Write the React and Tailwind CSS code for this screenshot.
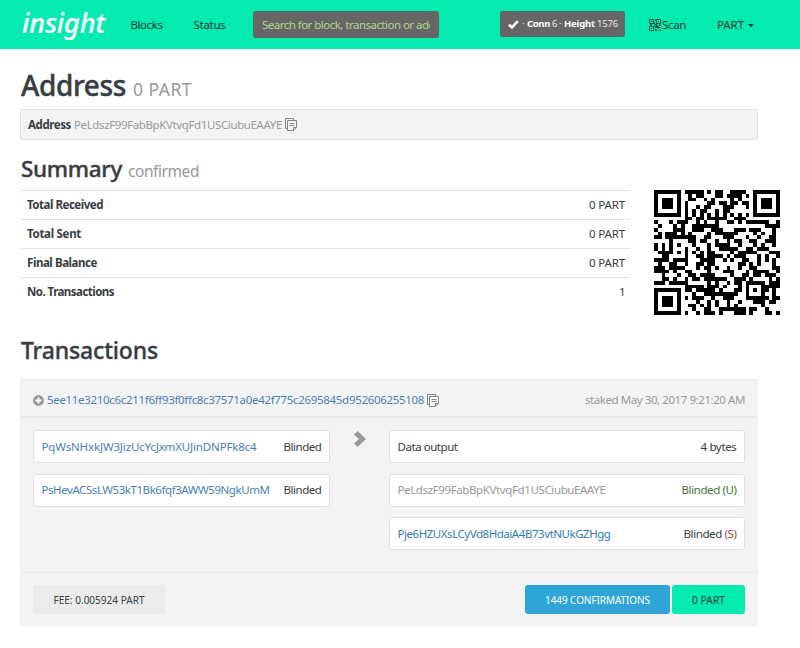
import { useLayoutEffect, useRef } from "react";

/* Text run with a fixed advance width: tracking is measured from the font. */
function Fit({ w, className = "", children }) {
  const ref = useRef(null);
  useLayoutEffect(() => {
    const el = ref.current;
    el.style.letterSpacing = "0px";
    const natural = el.getBoundingClientRect().width;
    el.style.letterSpacing = (w - natural) / el.textContent.length + "px";
  }, [w]);
  return (
    <span ref={ref} className={"inline-block shrink-0 whitespace-pre " + className}>
      {children}
    </span>
  );
}

/* ---- QR code, version 4, error correction M ---- */
const SIZE = 33;
const EXP = [];
const LOG = [];
for (let i = 0, x = 1; i < 255; i++) {
  EXP[i] = x;
  LOG[x] = i;
  x <<= 1;
  if (x > 255) x ^= 0x11d;
}
const mul = (a, b) => (a && b ? EXP[(LOG[a] + LOG[b]) % 255] : 0);

function remainder(data, n) {
  let gen = [1];
  for (let i = 0; i < n; i++) {
    const next = new Array(gen.length + 1).fill(0);
    gen.forEach((g, j) => {
      next[j] ^= g;
      next[j + 1] ^= mul(g, EXP[i]);
    });
    gen = next;
  }
  const buf = [...data, ...new Array(n).fill(0)];
  for (let i = 0; i < data.length; i++) {
    const f = buf[i];
    gen.forEach((g, j) => {
      buf[i + j] ^= mul(g, f);
    });
  }
  return buf.slice(data.length);
}

function codewords(text) {
  let bits = "0100" + text.length.toString(2).padStart(8, "0");
  for (const c of text) bits += c.charCodeAt(0).toString(2).padStart(8, "0");
  bits += "0000";
  const bytes = bits.match(/.{8}/g).map((b) => parseInt(b, 2));
  for (let i = 0; bytes.length < 64; i++) bytes.push(i % 2 ? 0x11 : 0xec);
  const blocks = [bytes.slice(0, 32), bytes.slice(32)];
  const ecc = blocks.map((b) => remainder(b, 18));
  const out = [];
  for (let i = 0; i < 32; i++) blocks.forEach((b) => out.push(b[i]));
  for (let i = 0; i < 18; i++) ecc.forEach((b) => out.push(b[i]));
  return out;
}

/* Data mask pattern 4 */
const MASK = 4;
const masked = (r, c) => (Math.floor(r / 2) + Math.floor(c / 3)) % 2 === 0;

function matrix(words) {
  const m = Array.from({ length: SIZE }, () => new Array(SIZE).fill(null));
  const finder = (r0, c0) => {
    for (let r = -1; r < 8; r++)
      for (let c = -1; c < 8; c++) {
        if (!m[r0 + r] || c0 + c < 0 || c0 + c >= SIZE) continue;
        const d = Math.max(Math.abs(r - 3), Math.abs(c - 3));
        m[r0 + r][c0 + c] = d !== 2 && d !== 4;
      }
  };
  finder(0, 0);
  finder(0, SIZE - 7);
  finder(SIZE - 7, 0);
  for (let r = -2; r < 3; r++)
    for (let c = -2; c < 3; c++)
      m[26 + r][26 + c] = Math.max(Math.abs(r), Math.abs(c)) !== 1;
  for (let i = 8; i < SIZE - 8; i++) m[6][i] = m[i][6] = i % 2 === 0;
  let rem = MASK << 10;
  for (let i = 14; i >= 10; i--) if ((rem >> i) & 1) rem ^= 0x537 << (i - 10);
  const fmt = ((MASK << 10) | rem) ^ 0x5412;
  for (let i = 0; i < 15; i++) {
    const on = ((fmt >> i) & 1) === 1;
    if (i < 6) m[i][8] = on;
    else if (i < 8) m[i + 1][8] = on;
    else m[SIZE - 15 + i][8] = on;
    if (i < 8) m[8][SIZE - 1 - i] = on;
    else if (i < 9) m[8][7] = on;
    else m[8][14 - i] = on;
  }
  m[SIZE - 8][8] = true;
  let k = 0;
  let up = true;
  for (let col = SIZE - 1; col > 0; col -= 2) {
    if (col === 6) col--;
    for (let j = 0; j < SIZE; j++) {
      const r = up ? SIZE - 1 - j : j;
      for (let c = col; c > col - 2; c--) {
        if (m[r][c] !== null) continue;
        const bit = k < 800 && ((words[k >> 3] >> (7 - (k & 7))) & 1) === 1;
        m[r][c] = bit !== masked(r, c);
        k++;
      }
    }
    up = !up;
  }
  return m;
}

function QrCode({ text }) {
  const d = matrix(codewords(text))
    .map((row, r) => row.map((on, c) => (on ? `M${c} ${r}h1v1h-1z` : "")).join(""))
    .join("");
  return (
    <svg className="h-[125px] w-[126px] shrink-0" viewBox="0 0 33 33" preserveAspectRatio="none" shapeRendering="crispEdges">
      <path d={d} fill="#000" />
    </svg>
  );
}

/* ---- Icons ---- */
const CopyIcon = ({ className = "" }) => (
  <svg className={"h-[13px] w-3 shrink-0 " + className} viewBox="0 0 12 13" fill="none" stroke="#858585" strokeWidth="1">
    <path d="M2.5 10.5h-2v-10h8v2" />
    <path d="M2.5 2.5h9v7l-3 3h-6z" fill="#f7f7f7" />
    <path d="M8.5 12.5v-3h3M4.5 5.5h5M4.5 7.5h5" />
  </svg>
);

const CheckIcon = () => (
  <svg className="h-[9px] w-[11px] shrink-0" viewBox="0 0 11 9">
    <path d="M1 4.7 4 7.4 9.8 1.2" fill="none" stroke="#fff" strokeWidth="2.6" />
  </svg>
);

const ScanIcon = () => (
  <svg className="h-3 w-3 shrink-0" viewBox="0 0 12 12" shapeRendering="crispEdges">
    <path
      fill="#0f5c48"
      fillRule="evenodd"
      d="M0 0h5v5H0zM1 1v3h3V1zM7 0h5v5H7zM8 1v3h3V1zM0 7h5v5H0zM1 8v3h3V8z"
    />
    <path
      fill="#0f5c48"
      d="M2 2h1v1H2zM9 2h1v1H9zM2 9h1v1H2zM6 0h1v2H6zM5 3h1v4H5zM6 5h2v1H6zM1 5h2v2H1zM7 6h2v1h1v1h2v1h-2v1H9V9H7zM6 10h2v2H6zM10 5h2v2h-2zM9 11h1v1H9zM11 10h1v2h-1zM6 7h1v2H6z"
    />
  </svg>
);

const PlusIcon = () => (
  <svg className="size-[11px] shrink-0" viewBox="0 0 11 11">
    <circle cx="5.5" cy="5.5" r="5.4" fill="#999" />
    <path d="M5.5 2.5v6M2.5 5.5h6" stroke="#fff" strokeWidth="1.8" />
  </svg>
);

const ChevronIcon = () => (
  <svg className="h-4 w-3 shrink-0" viewBox="0 0 12 16">
    <path d="M3.6 0 12 8l-8.4 8L0 12.6 4.8 8 0 3.4z" fill="#999" />
  </svg>
);

/* ---- Page pieces ---- */
function SummaryRow({ label, lw, value, vw }) {
  return (
    <div className="flex h-[29px] items-center justify-between border-t border-[#e4e4e4] pr-[5px] pl-[7px]">
      <Fit w={lw} className="font-bold">{label}</Fit>
      <Fit w={vw}>{value}</Fit>
    </div>
  );
}

function Entry({ children }) {
  return (
    <div className="flex h-[33px] items-center justify-between rounded-[3px] border border-[#e0e0e0] bg-white px-[7.5px]">
      {children}
    </div>
  );
}

export default function App() {
  return (
    <div className="h-[648px] w-[800px] overflow-hidden bg-white font-['Noto_Sans','Open_Sans',sans-serif] text-[11.5px] leading-4 text-[#373d42]">
      <header className="flex h-[49px] items-center bg-[#04ebb0] pl-[22px] text-[#12382e]">
        <Fit w={83} className="-mt-1 text-[27px] leading-8 font-medium text-white italic [-webkit-text-stroke:0.2px]">insight</Fit>
        <Fit w={32} className="ml-[25.5px]">Blocks</Fit>
        <Fit w={32} className="ml-[31px]">Status</Fit>
        <div className="ml-[27.5px] flex h-[27px] w-[186px] items-center rounded-[3px] bg-[#666] px-[9px] text-[#b3d48c]">
          <div className="w-[168px] overflow-hidden">
            <Fit w={193}>Search for block, transaction or address</Fit>
          </div>
        </div>
        <div className="-mt-px ml-[61px] flex h-[26px] w-[125px] items-center rounded-[3px] bg-[#666] pl-2 text-[9.5px] text-[#e8e8e8]">
          <CheckIcon />
          <Fit w={5} className="ml-[3px]">·</Fit>
          <Fit w={23} className="font-bold text-white">Conn</Fit>
          <Fit w={6} className="ml-[2px]">6</Fit>
          <Fit w={4} className="ml-[1px]">·</Fit>
          <Fit w={31} className="ml-[1px] font-bold text-white">Height</Fit>
          <Fit w={21} className="ml-[2px]">1576</Fit>
        </div>
        <div className="ml-[24px] flex items-center">
          <ScanIcon />
          <Fit w={24} className="ml-[1px]">Scan</Fit>
        </div>
        <Fit w={27} className="ml-[31px]">PART</Fit>
        <span className="mt-0.5 ml-1 border-x-[3px] border-t-[3px] border-x-transparent border-t-[#12382e]" />
      </header>

      <main className="pl-5">
        <h1 className="flex h-[60px] items-baseline pt-[18px] leading-9">
          <Fit w={106} className="pl-px text-[28px] font-medium [-webkit-text-stroke:0.4px]">Address</Fit>
          <Fit w={59} className="ml-[7px] text-[17.5px] text-[#999]">0 PART</Fit>
        </h1>
        <div className="flex h-[31px] w-[738px] items-center rounded-[2px] border border-[#e2e2e2] bg-[#f4f4f4] pl-[7px]">
          <Fit w={43} className="font-bold">Address</Fit>
          <Fit w={208} className="ml-[3px] text-[#999]">PeLdszF99FabBpKVtvqFd1USCiubuEAAYE</Fit>
          <CopyIcon className="ml-[3px]" />
        </div>

        <h2 className="flex h-[50px] items-baseline pt-[14px] leading-[30px]">
          <Fit w={102} className="pl-px text-[22.5px] font-medium [-webkit-text-stroke:0.35px]">Summary</Fit>
          <Fit w={71} className="ml-[6px] text-[15.5px] text-[#999]">confirmed</Fit>
        </h2>
        <div className="flex h-[126px]">
          <div className="w-[610px]">
            <SummaryRow label="Total Received" lw={76} value="0 PART" vw={36} />
            <SummaryRow label="Total Sent" lw={54} value="0 PART" vw={36} />
            <SummaryRow label="Final Balance" lw={70} value="0 PART" vw={36} />
            <SummaryRow label="No. Transactions" lw={87} value="1" vw={6} />
          </div>
          <div className="ml-6">
            <QrCode text="PeLdszF99FabBpKVtvqFd1USCiubuEAAYE" />
          </div>
        </div>

        <h2 className="flex h-[63px] items-baseline pt-[19px] leading-[30px]">
          <Fit w={138} className="pl-px text-[23px] font-medium [-webkit-text-stroke:0.35px]">Transactions</Fit>
        </h2>
        <section className="flex h-[247px] w-[738px] flex-col rounded-[2px] border border-[#eeeeee] bg-[#f3f3f3]">
          <div className="flex h-[38px] items-center border-b-2 border-[#eaeaea] pt-1 pr-3 pl-3">
            <PlusIcon />
            <Fit w={377} className="ml-[3px] text-[#4a80ba]">
              5ee11e3210c6c211f6ff93f0ffc8c37571a0e42f775c2695845d952606255108
            </Fit>
            <CopyIcon className="ml-[3px]" />
            <Fit w={160} className="ml-auto text-[#999]">staked May 30, 2017 9:21:20 AM</Fit>
          </div>
          <div className="flex h-[154px] items-start pt-3 pl-3">
            <div className="flex w-[297px] flex-col gap-[10.5px]">
              <Entry>
                <Fit w={215} className="text-[#4a80ba]">PqWsNHxkJW3JizUcYcJxmXUJinDNPFk8c4</Fit>
                <Fit w={38}>Blinded</Fit>
              </Entry>
              <Entry>
                <Fit w={228} className="text-[#4a80ba]">PsHevACSsLW53kT1Bk6fqf3AWW59NgkUmM</Fit>
                <Fit w={38}>Blinded</Fit>
              </Entry>
            </div>
            <div className="mt-px flex w-[59px] pl-6">
              <ChevronIcon />
            </div>
            <div className="flex w-[356px] flex-col gap-[10.5px]">
              <Entry>
                <Fit w={60}>Data output</Fit>
                <Fit w={36}>4 bytes</Fit>
              </Entry>
              <Entry>
                <Fit w={208} className="text-[#999]">PeLdszF99FabBpKVtvqFd1USCiubuEAAYE</Fit>
                <Fit w={55} className="text-[#3c763d]">Blinded (U)</Fit>
              </Entry>
              <Entry>
                <Fit w={213} className="text-[#2f7cba]">Pje6HZUXsLCyVd8HdaiA4B73vtNUkGZHgg</Fit>
                <Fit w={53}>
                  Blinded <span className="text-[#a94442]">(S)</span>
                </Fit>
              </Entry>
            </div>
          </div>
          <div className="flex flex-1 items-start border-t border-[#e8e8e8] px-3 pt-3 text-[10px]">
            <div className="flex h-[29px] w-[132px] items-center justify-center rounded-[2px] bg-[#ebebeb]">
              <Fit w={91}>FEE: 0.005924 PART</Fit>
            </div>
            <div className="ml-auto flex h-[29px] w-[145px] items-center justify-center rounded-[3px] bg-[#2fa4d7] text-white">
              <Fit w={105}>1449 CONFIRMATIONS</Fit>
            </div>
            <div className="ml-[2px] flex h-[29px] w-[73px] items-center justify-center rounded-[3px] bg-[#04ebb0] text-[#12382e]">
              <Fit w={33}>0 PART</Fit>
            </div>
          </div>
        </section>
      </main>
    </div>
  );
}
